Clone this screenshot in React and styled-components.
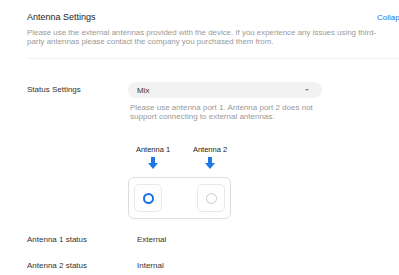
import React from 'react';
import styled, { createGlobalStyle } from 'styled-components';

const GlobalStyle = createGlobalStyle`
  html, body {
    margin: 0;
    padding: 0;
    background: #ffffff;
    overflow: hidden;
  }
  body {
    font-family: 'Liberation Sans', Arial, sans-serif;
    color: #333333;
  }
`;

const Page = styled.div`
  width: 399px;
  height: 275px;
  overflow: hidden;
  padding-left: 27px;
  box-sizing: border-box;
`;

const Header = styled.div`
  display: flex;
  align-items: center;
  padding-top: 10px;
  height: 14px;
  white-space: nowrap;
`;

const Title = styled.h2`
  margin: 0;
  font-size: 9px;
  font-weight: normal;
  color: #222222;
  flex: 1;
`;

const CollapseLink = styled.a`
  font-size: 8px;
  color: #1a73e8;
  margin-right: -30px;
  width: 52px;
  cursor: pointer;
`;

const Description = styled.p`
  margin: 4px 0 0;
  max-width: 358px;
  font-size: 7.9px;
  line-height: 9px;
  color: #999999;
`;

const Divider = styled.div`
  margin-top: 12px;
  height: 1px;
  background: #f3f3f3;
`;

const Form = styled.div`
  padding-top: 23px;
  display: flex;
  flex-direction: column;
`;

const Row = styled.div`
  display: grid;
  grid-template-columns: 101px 1fr;
  align-items: ${(p) => (p.$top ? 'start' : 'center')};
  min-height: ${(p) => p.$height || 16}px;
  margin-top: ${(p) => p.$offset || 0}px;
`;

const Label = styled.div`
  font-size: 8px;
  color: #333333;
  line-height: 16px;
`;

const Field = styled.div`
  display: flex;
  flex-direction: column;
`;

const Select = styled.div`
  width: 194px;
  height: 16px;
  border-radius: 8px;
  background: #f2f2f2;
  display: flex;
  align-items: center;
  justify-content: space-between;
  padding: 0 13px 0 9px;
  box-sizing: border-box;
  font-size: 8px;
  color: #333333;
`;

const Caret = styled.span`
  width: 0;
  height: 0;
  border-left: 2.5px solid transparent;
  border-right: 2.5px solid transparent;
  border-top: 2.5px solid #888888;
`;

const Hint = styled.div`
  margin-top: 5px;
  padding-left: 2px;
  font-size: 8px;
  line-height: 9px;
  color: #999999;
  max-width: 200px;
`;

const Ports = styled.div`
  margin-top: 24px;
  width: 103px;
  display: flex;
  flex-direction: column;
`;

const PortLabels = styled.div`
  display: flex;
  justify-content: space-between;
  padding: 0 0 0 6px;
  font-size: 7.5px;
  color: #222222;
  line-height: 9px;
`;

const PortLabel = styled.div`
  width: 42px;
  display: flex;
  flex-direction: column;
  align-items: center;
  gap: 3px;
  margin-left: ${(p) => (p.$first ? '-2px' : '0')};
`;

const PortBox = styled.div`
  margin-top: 8px;
  height: 42px;
  border: 1px solid #dddddd;
  border-radius: 6px;
  box-sizing: border-box;
  display: flex;
  align-items: center;
  justify-content: space-between;
  padding: 0 5px;
`;

const Port = styled.div`
  width: 28px;
  height: 28px;
  border: 1px solid #e8e8e8;
  border-radius: 5px;
  box-sizing: border-box;
  display: flex;
  align-items: center;
  justify-content: center;
`;

const Radio = styled.span`
  width: 11px;
  height: 11px;
  border-radius: 50%;
  box-sizing: border-box;
  border: ${(p) => (p.$on ? '2.8px solid #1a6fe3' : '1px solid #c8c8c8')};
`;

const Value = styled.div`
  font-size: 8px;
  color: #333333;
  padding-left: 9px;
  line-height: 16px;
`;

const ArrowDown = () => (
  <svg width="10" height="12" viewBox="0 0 10 12">
    <path d="M3 0h4v6h3l-5 6-5-6h3z" fill="#1e78e6" />
  </svg>
);

export default function App() {
  return (
    <>
      <GlobalStyle />
      <Page>
        <Header>
          <Title>Antenna Settings</Title>
          <CollapseLink>Collapse</CollapseLink>
        </Header>
        <Description>
          Please use the external antennas provided with the device. If you experience any issues using third-party antennas please contact the company you purchased them from.
        </Description>
        <Divider />
        <Form>
          <Row $top>
            <Label>Status Settings</Label>
            <Field>
              <Select>
                <span>Mix</span>
                <Caret />
              </Select>
              <Hint>
                Please use antenna port 1. Antenna port 2 does not support connecting to external antennas.
              </Hint>
              <Ports>
                <PortLabels>
                  <PortLabel $first>
                    <span>Antenna 1</span>
                    <ArrowDown />
                  </PortLabel>
                  <PortLabel>
                    <span>Antenna 2</span>
                    <ArrowDown />
                  </PortLabel>
                </PortLabels>
                <PortBox>
                  <Port>
                    <Radio $on />
                  </Port>
                  <Port>
                    <Radio />
                  </Port>
                </PortBox>
              </Ports>
            </Field>
          </Row>
          <Row $height={26} $offset={8}>
            <Label>Antenna 1 status</Label>
            <Value>External</Value>
          </Row>
          <Row $height={26}>
            <Label>Antenna 2 status</Label>
            <Value>Internal</Value>
          </Row>
        </Form>
      </Page>
    </>
  );
}
